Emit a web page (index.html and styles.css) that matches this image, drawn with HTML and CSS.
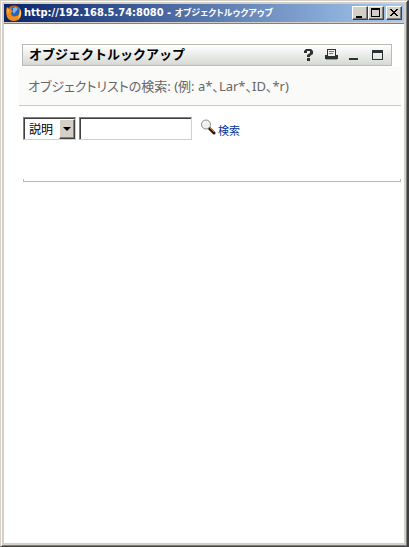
FILE: index.html
```html
<!DOCTYPE html>
<html lang="ja">
<head>
    <meta charset="UTF-8">
    <meta name="viewport" content="width=device-width, initial-scale=1.0">
    <title>オブジェクトルックアップ</title>
    <link rel="stylesheet" href="styles.css">
</head>
<body>
    <div class="window">
        <div class="titlebar">
            <svg class="firefox" viewBox="0 0 16 16" aria-hidden="true">
                <circle cx="8" cy="8" r="7.5" fill="#e66000"/>
                <circle cx="8.5" cy="7" r="5.5" fill="#2a62b5"/>
                <path d="M7 3l3-1 2 2-2 2-2 3-1-2z" fill="#74b9e8"/>
                <path d="M1 2l2 2 3-1-1 2 2 1-2 2c0 3 3 4 5 3 3 0 4-3 3-7 3 3 3 8-1 11-4 2-9 1-11-3C0 8 0 4 1 2z" fill="#f58a1c"/>
                <path d="M14 4c2 4 1 8-2 10 1-3 2-5 2-10z" fill="#ffd54a"/>
                <path d="M1 3l2 2-1 4z" fill="#ffc23c"/>
            </svg>
            <div class="caption">http://192.168.5.74:8080 - <span class="caption-ja">オブジェクトルゥクアゥブ</span></div>
            <div class="controls">
                <button class="win-btn" type="button" aria-label="最小化">
                    <svg viewBox="0 0 12 10"><path d="M2 8h6v2H2z"/></svg>
                </button>
                <button class="win-btn" type="button" aria-label="最大化">
                    <svg viewBox="0 0 12 10"><path d="M1 0h9v9H1zM2 2v6h7V2z" fill-rule="evenodd"/></svg>
                </button>
                <button class="win-btn close" type="button" aria-label="閉じる">
                    <svg viewBox="0 0 12 10"><path d="M2 1h2v1h1v1h2V2h1V1h2v1H9v1H8v1H7v1h1v1h1v1h1v1H8V7H7V6H5v1H4v1H2V7h1V6h1V5h1V4H4V3H3V2H2z"/></svg>
                </button>
            </div>
        </div>
        <main class="page">
            <div class="portlet-bar">
                <h1>オブジェクトルックアップ</h1>
                <div class="tools">
                    <button class="tool" type="button" aria-label="ヘルプ">
                        <svg viewBox="0 0 13 12"><path d="M2 4V2l2-2h5l2 2v3L8 7v1H5V6l3-2V2H5v2zM5 9h3v3H5z"/></svg>
                    </button>
                    <button class="tool" type="button" aria-label="印刷">
                        <svg viewBox="0 0 13 12"><path d="M2 0h9v6h2v4H0V6h2z"/><path d="M3 1h7v6H3z" fill="#eee"/><path d="M4 2h5v1H4zM4 4h4v1H4z" fill="#777"/><path d="M1 10h11v1H1z" fill="#999"/></svg>
                    </button>
                    <button class="tool" type="button" aria-label="最小化">
                        <svg viewBox="0 0 13 12"><path d="M1 9h9v2H1z"/></svg>
                    </button>
                    <button class="tool" type="button" aria-label="最大化">
                        <svg viewBox="0 0 13 12"><path d="M1 1h11v10H1zM2 4v6h9V4z" fill-rule="evenodd"/></svg>
                    </button>
                </div>
            </div>
            <p class="hint">オブジェクトリストの検索: (例: a*、Lar*、ID、*r)</p>
            <form class="search">
                <div class="select-box">
                    <select aria-label="検索項目">
                        <option>説明</option>
                    </select>
                    <span class="arrow"></span>
                </div>
                <input class="keyword" type="text" aria-label="キーワード">
                <a class="search-link" href="#">
                    <svg viewBox="0 0 16 16" aria-hidden="true">
                        <path d="M9 9l5 5" stroke="#2b1711" stroke-width="3" stroke-linecap="round"/>
                        <path d="M10 9l4 4" stroke="#c7793b" stroke-width="1"/>
                        <circle cx="6" cy="5.5" r="4.5" fill="#edf1f2" stroke="#8b8b8b"/>
                        <path d="M3 5.5a3 3 0 0 1 3-3" stroke="#fff" fill="none"/>
                    </svg>
                    <span>検索</span>
                </a>
            </form>
            <div class="results"></div>
        </main>
    </div>
</body>
</html>
```

FILE: styles.css
```css
* {
    box-sizing: border-box;
}
body,
h1,
p {
    margin: 0;
}
body {
    font-family: "Liberation Sans", "Noto Sans CJK JP", sans-serif;
    background: #d4d0c8;
}
button {
    padding: 0;
}
svg {
    display: block;
}
.window {
    display: flex;
    flex-direction: column;
    min-height: 100vh;
    padding: 3px;
    border: 1px solid #d4d0c8;
    border-right: 2px solid #404040;
    border-bottom-color: #404040;
    box-shadow: inset 1px 1px #fff, inset -1px -1px #808080;
}
.titlebar {
    display: flex;
    align-items: center;
    gap: 2px;
    height: 18px;
    padding: 0 2px;
    background: linear-gradient(to right, #0a246a, #a6caf0);
}
.firefox {
    flex: none;
    width: 16px;
    height: 16px;
}
.caption {
    flex: 1;
    overflow: hidden;
    color: #fff;
    font: bold 11px/18px "DejaVu Sans Condensed", "DejaVu Sans", "Noto Sans CJK JP", sans-serif;
    white-space: nowrap;
}
.caption-ja {
    font-size: 9px;
    font-feature-settings: "palt";
}
.controls {
    display: flex;
}
.win-btn {
    width: 16px;
    height: 14px;
    background: #d4d0c8;
    border: 1px solid;
    border-color: #fff #404040 #404040 #fff;
    box-shadow: inset -1px -1px #808080;
}
.win-btn svg {
    width: 12px;
    height: 10px;
    margin: 1px;
}
.close {
    margin-left: 2px;
}
.page {
    flex: 1;
    margin-top: 1px;
    padding: 20px 3px 0 15px;
    background: #fff;
    border-top: 1px solid #808080;
}
.portlet-bar {
    display: flex;
    align-items: center;
    justify-content: space-between;
    height: 22px;
    margin: 0 9px 0 3px;
    padding: 0 7px 0 6px;
    border: 1px solid #b8bab4;
    background: linear-gradient(#fff, #d6d9d4);
}
h1 {
    font-size: 13px;
    line-height: 20px;
}
.tools {
    display: flex;
    gap: 10px;
}
.tool {
    border: 0;
    background: none;
}
.tool svg {
    width: 13px;
    height: 12px;
    fill: #2c3133;
}
.hint {
    margin-top: 1px;
    padding: 9px;
    border-bottom: 1px solid #c8c8c8;
    background: #fafaf8;
    color: #666;
    font-family: "Noto Sans", "Noto Sans CJK JP", sans-serif;
    font-size: 13px;
    line-height: 20px;
    font-feature-settings: "palt";
}
.search {
    display: flex;
    gap: 3px;
    margin: 11px 0 0 4px;
}
.select-box,
.keyword {
    height: 23px;
    background: #fff;
    border: 1px solid;
    border-color: #808080 #d4d0c8 #d4d0c8 #808080;
    box-shadow: inset 1px 1px #404040;
}
.select-box {
    position: relative;
    width: 53px;
}
select {
    width: 100%;
    height: 21px;
    padding: 0 0 0 5px;
    border: 0;
    background: none;
    color: #000;
    font: 12px "Noto Sans CJK JP", sans-serif;
    appearance: none;
}
.arrow {
    position: absolute;
    top: 1px;
    right: 0;
    display: flex;
    align-items: center;
    justify-content: center;
    width: 16px;
    height: 20px;
    background: #d4d0c8;
    border: 1px solid;
    border-color: #fff #404040 #404040 #fff;
    box-shadow: inset -1px -1px #808080;
    pointer-events: none;
}
.arrow::before {
    content: "";
    border: 4px solid transparent;
    border-top-color: #000;
    border-bottom: 0;
}
.keyword {
    width: 113px;
    padding: 2px 4px;
    font-size: 13px;
    outline: none;
}
.search-link {
    display: flex;
    gap: 2px;
    margin: 2px 0 0 5px;
    color: #039;
    font-size: 11px;
    line-height: 24px;
    text-decoration: none;
}
.search-link svg {
    width: 16px;
    height: 16px;
}
.results {
    height: 3px;
    margin: 36px 0 0 4px;
    border: 1px solid #b8b8b8;
    border-top: 0;
}
```
